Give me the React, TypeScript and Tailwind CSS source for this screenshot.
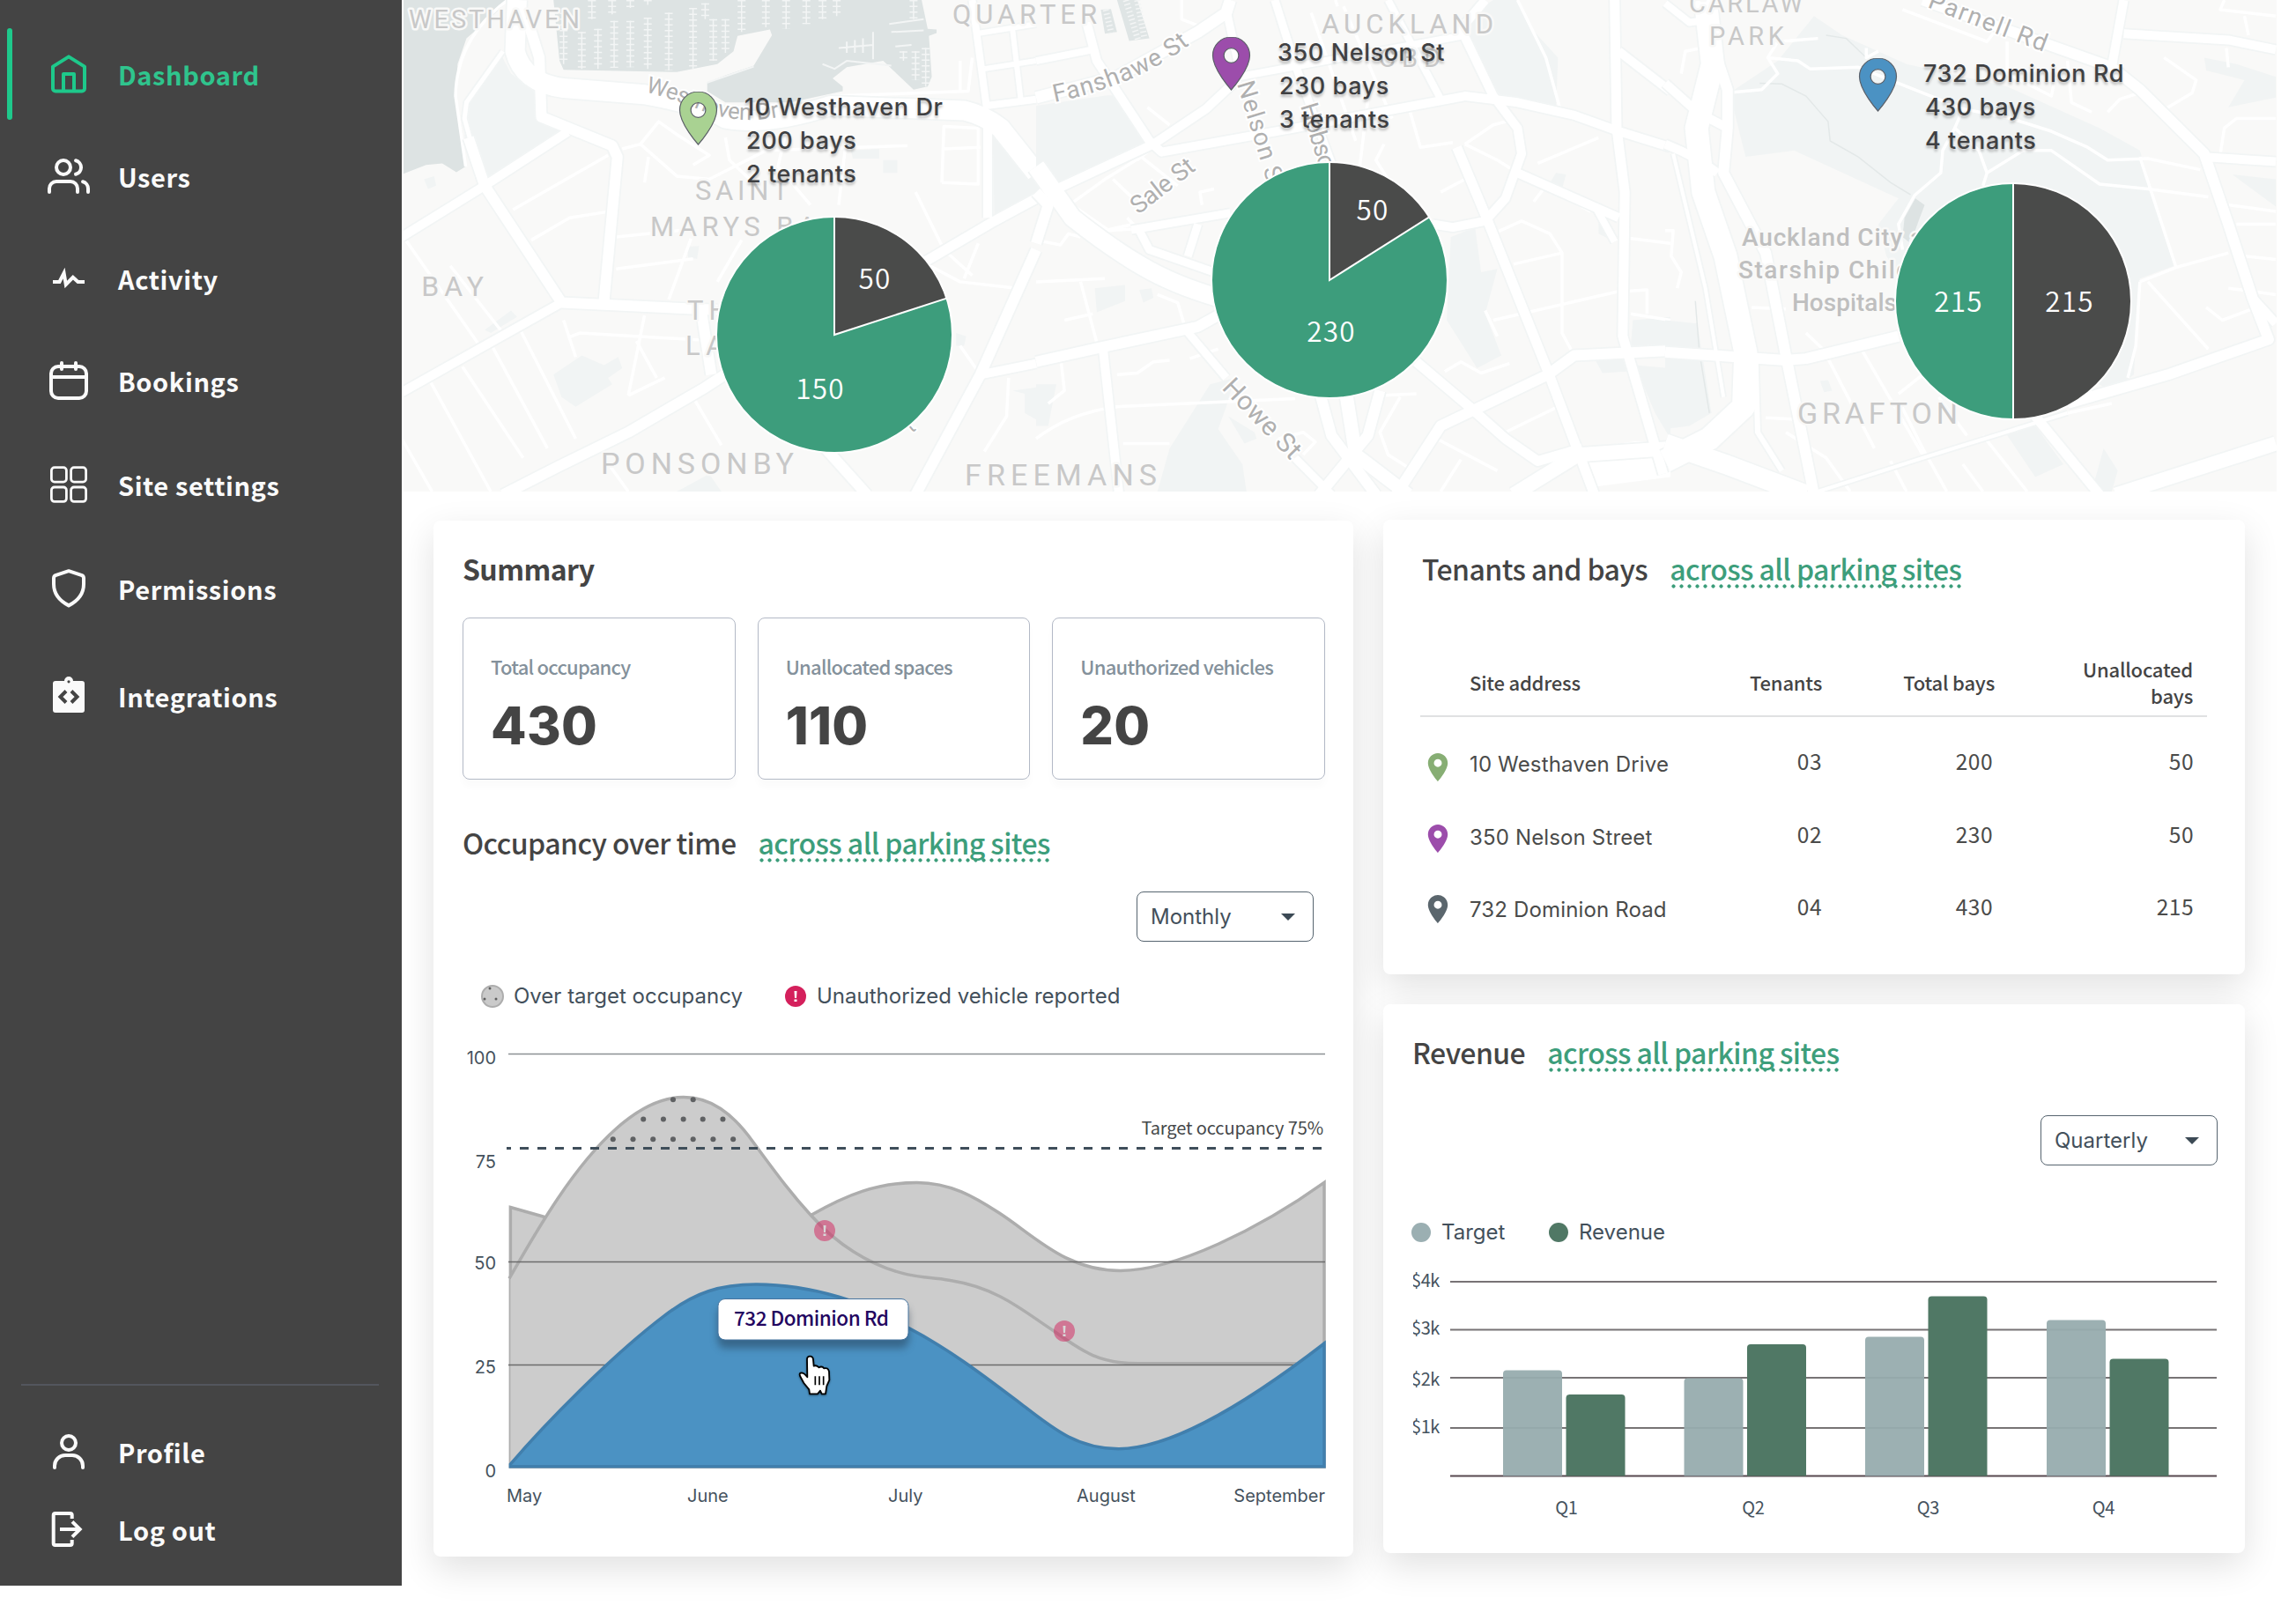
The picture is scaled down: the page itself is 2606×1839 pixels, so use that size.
import type { ReactNode } from "react";

const SOURCE = "font-['Noto_Sans_CJK_SC','Noto_Sans',sans-serif]";
const INTER = "font-['Inter',sans-serif]";

/* ---------------------------------- icons --------------------------------- */

function Icon({ children, w = 4 }: { children: ReactNode; w?: number }) {
  return (
    <svg className="size-12 shrink-0" viewBox="0 0 48 48" fill="none" stroke="currentColor" strokeWidth={w}>
      {children}
    </svg>
  );
}

const HomeIcon = () => (
  <Icon>
    <path d="M24 4.4L6 15.6V40.5a3 3 0 0 0 3 3H39a3 3 0 0 0 3-3V15.6Z" strokeLinejoin="round" />
    <path d="M18 43V24H30V43" strokeLinejoin="round" />
  </Icon>
);
const UsersIcon = () => (
  <Icon>
    <g strokeLinecap="round" strokeLinejoin="round">
      <path d="M34 42v-4a8 8 0 0 0-8-8H10a8 8 0 0 0-8 8v4" />
      <circle cx="18" cy="14" r="8" />
      <path d="M46 42v-4a8 8 0 0 0-6-7.74M32 6.26a8 8 0 0 1 0 15.5" />
    </g>
  </Icon>
);
const ActivityIcon = () => (
  <Icon w={4}>
    <path d="M6 28H13.5L18.6 18L20.8 31L28.800 22.800L34.5 28H42" strokeMiterlimit={10} />
  </Icon>
);
const BookingsIcon = () => (
  <Icon>
    <rect x="4" y="8" width="40" height="36" rx="8" />
    <path d="M4 20H44" />
    <path d="M16 4V11M32 4V11" strokeLinecap="round" />
  </Icon>
);
const GridIcon = () => (
  <Icon w={2.8}>
    <rect x="4.4" y="4.7" width="17" height="16.4" rx="3.4" />
    <rect x="26.6" y="4.7" width="17" height="16.4" rx="3.4" />
    <rect x="4.4" y="27" width="17" height="16.4" rx="3.4" />
    <rect x="26.6" y="27" width="17" height="16.4" rx="3.4" />
  </Icon>
);
const ShieldIcon = () => (
  <Icon>
    <path d="M24 4.2L9 9.2Q7 10 7 12.5V19C7 31 14.5 38.500 24 43.400C33.500 38.500 41 31 41 19V12.500Q41 10 39 9.200Z" strokeLinejoin="round" />
  </Icon>
);
const IntegrationsIcon = () => (
  <Icon>
    <path
      d="M9 7H19A5 5 0 0 1 29 7H39a3 3 0 0 1 3 3V40a3 3 0 0 1-3 3H9a3 3 0 0 1-3-3V10a3 3 0 0 1 3-3Z"
      fill="currentColor"
      stroke="none"
    />
    <circle cx="24" cy="7.800" r="1.600" fill="#444" stroke="none" />
    <path d="M21 18.500L14.500 25L21 31.500M27 18.500L33.500 25L27 31.500" stroke="#444" />
  </Icon>
);
const ProfileIcon = () => (
  <Icon>
    <circle cx="24" cy="14" r="8" />
    <path d="M8 42V40A12 12 0 0 1 20 28H28A12 12 0 0 1 40 40V42" strokeLinecap="round" />
  </Icon>
);
const LogoutIcon = () => (
  <Icon>
    <path d="M27.700 12V8a2 2 0 0 0-2-2H8.700a2 2 0 0 0-2 2V40a2 2 0 0 0 2 2H25.700a2 2 0 0 0 2-2V36" />
    <path d="M14 24H36.500M28 15.300L36.700 24L28 32.700" />
  </Icon>
);

function Pin({ fill, className, outline = false }: { fill: string; className: string; outline?: boolean }) {
  return (
    <svg className={className} viewBox="5 2 14 20" overflow="visible">
      <path
        fillRule="evenodd"
        fill={fill}
        stroke={outline ? "#5c6068" : "none"}
        strokeWidth={outline ? 0.4 : 0}
        d="M12 2C8.130 2 5 5.130 5 9c0 5.250 7 13 7 13s7-7.750 7-13c0-3.870-3.130-7-7-7zm0 4.200a2.800 2.800 0 1 1 0 5.600a2.800 2.800 0 0 1 0-5.600z"
      />
    </svg>
  );
}

/* --------------------------------- sidebar -------------------------------- */

const NAV = [
  { label: "Dashboard", icon: <HomeIcon />, h: "h-[116px]", active: true },
  { label: "Users", icon: <UsersIcon />, h: "h-[116px]" },
  { label: "Activity", icon: <ActivityIcon />, h: "h-[116px]" },
  { label: "Bookings", icon: <BookingsIcon />, h: "h-[116px]" },
  { label: "Site settings", icon: <GridIcon />, h: "h-[120px]" },
  { label: "Permissions", icon: <ShieldIcon />, h: "h-[116px]" },
  { label: "Integrations", icon: <IntegrationsIcon />, h: "h-[128px]" },
];

function NavItem({ label, icon, h, active = false }: { label: string; icon: ReactNode; h: string; active?: boolean }) {
  return (
    <a className={`relative flex items-center pl-[54px] ${h} ${active ? "text-[#1ec98b]" : "text-[#fafafa]"}`}>
      {active && <span className="absolute left-2 top-[5px] h-[104px] w-1.5 rounded-full bg-[#1ec98b]" />}
      <span className="-mt-[2px]">{icon}</span>
      <span className={`${SOURCE} -mt-[3px] ml-8 text-[29px] font-bold leading-10 tracking-[0.600px] ${active ? "text-[#2fc48d]" : "text-[#fafafa]"}`}>
        {label}
      </span>
    </a>
  );
}

function Sidebar() {
  return (
    <aside className="flex h-[1800px] w-[456px] shrink-0 flex-col bg-[#444444] pt-[27px]">
      <nav>
        {NAV.map((n) => (
          <NavItem key={n.label} {...n} />
        ))}
      </nav>
      <div className="mx-6 mt-auto h-0.5 w-[406px] bg-[#53565e]" />
      <div className="mb-[19px] mt-8">
        <NavItem label="Profile" icon={<ProfileIcon />} h="h-[88px]" />
        <NavItem label="Log out" icon={<LogoutIcon />} h="h-[88px]" />
      </div>
    </aside>
  );
}

/* ----------------------------------- map ---------------------------------- */

type Road = [d: string, width: number];

const WEST_ROADS: Road[] = [
  ["M285,0L280,160Q300,260 400,275L600,295Q750,330 800,370Q900,395 1060,330L1390,345Q1440,360 1480,400L1568,540", 22],
  ["M310,60L340,180L345,365L520,455L533,490L500,940", 12],
  ["M165,430L205,580L395,945L780,968", 12],
  ["M0,740L205,580L410,412", 10],
  ["M0,1225L395,945", 10],
  ["M250,1545L390,1455L560,1350L750,1210L860,1120", 12],
  ["M740,968L765,1170", 12],
  ["M1290,820L1465,690L1568,620", 11],
  ["M1448,380L1448,680", 10],
  ["M1568,780L1430,1170L1270,1545", 12],
  ["M1430,1170L1568,1135", 10],
  ["M1040,1390L1150,1545", 12],
  ["M1410,0L1445,330L1568,310", 8],
  ["M1420,105L1568,75M1440,215L1568,190M1510,95L1530,310", 6],
  ["M250,160L160,320L155,370L168,430", 5],
];
const WEST_LANES =
  "M262,0Q135,120 133,300L158,520M275,655L510,485M320,750L415,680L505,662M545,465L590,450L635,380L680,420L760,485L720,515M590,450L680,550L760,560L900,470L1250,455M610,490L600,570M530,740L720,715M530,840L720,808M715,745L660,935M840,750L780,880M600,985L560,1235M410,1055L440,1040L780,1065M580,1065L630,1180M10,750L190,1075M120,830L250,1040M70,1190L220,1535M150,1145L300,1430M225,1085L360,1400M295,1035L430,1370M400,1000L430,1115M0,1370L75,1535M500,1430L560,1535M720,1240L790,1390M560,1235L650,1180M1270,600L1340,780L1410,860M1100,420L1080,640M1335,570L1425,575L1425,400L1340,395L1335,570M1340,465L1430,460M1290,820L1380,880L1520,900M1380,1080L1430,1170M1425,760L1390,870M1500,1180L1495,1300L1440,1410M1380,190L1380,290M1060,300L1400,285L1410,180M800,430L810,500L860,560M950,410L930,520L1010,640";

const MID_ROADS: Road[] = [
  ["M0,520L90,680Q180,770 260,830Q340,890 450,930", 20],
  ["M0,190L140,155", 8],
  ["M125,70L150,190L280,440L310,475L640,400L1060,300L1190,320L1330,360L1440,410L1568,460", 10],
  ["M60,585L290,450L420,340L500,245", 10],
  ["M0,305L200,240L400,100L470,40L480,0", 13],
  ["M470,30L500,200", 9],
  ["M590,0L640,200L730,510", 9],
  ["M500,240L1060,110", 8],
  ["M870,0L1000,310", 8],
  ["M1110,0L1050,90L1130,300L1190,400L1200,480L1160,620L1110,690L1030,710L980,700", 10],
  ["M1040,460L1110,670L1265,1160L1380,1545", 11],
  ["M1430,0L1435,400L1455,600L1450,1050L1550,1480", 11],
  ["M1440,160L1568,285", 10],
  ["M1190,540L1440,680", 10],
  ["M1380,640L1430,755", 8],
  ["M0,1130L160,1085L400,1020L450,985", 12],
  ["M165,1085L205,1545", 10],
  ["M370,1030L470,1180", 9],
  ["M640,1430L730,1545", 9],
  ["M940,1130L1080,1280L1160,1370L1240,1440L1350,1400", 11],
  ["M890,1545L1000,1330L1265,1170L1330,1110L1568,1095", 12],
  ["M700,1220L730,1360L840,1545", 12],
  ["M765,1220L790,1420L920,1545", 15],
  ["M850,1220L820,1360L700,1545", 12],
  ["M235,718L480,665", 9],
  ["M255,720L280,780L440,850", 9],
  ["M400,700L375,800", 9],
  ["M0,600L30,640L0,760", 12],
  ["M1180,1545L1340,1420L1568,1400", 16],
];
const MID_LANES =
  "M60,660L170,560L260,490L350,580M190,560L240,620M100,650L180,720L240,715M170,720L240,700L225,680M250,500L330,420M360,0L360,60L420,90M680,40L790,440M760,20L880,370M820,310L800,520M740,0L745,20M1190,0L1260,180L1295,340M1060,450L1130,390L1190,370M1060,450L1140,500L1190,540M1240,510L1390,430M1230,630L1260,580L1370,660M1130,730L1200,690L1270,730L1300,790L1180,825M1130,1000L1440,910M1110,970L1140,1050M1300,790L1300,1040L1330,1110M1440,740L1568,760M1450,910L1510,905L1510,980M1470,980L1568,1000M0,880L170,870M110,880L150,1070M70,1000L140,980M300,920L350,945L370,1030M0,1370Q80,1290 200,1270L640,1245M200,1170L250,1165L290,1130L330,1125M215,1385L330,1385M60,1110L70,1220L30,1260M380,1120L450,1090M990,1370L1140,1470M1050,1435L1000,1535M1160,1350L1290,1270M1010,1160L1050,1130L1100,1165L1170,1135M850,1235L940,1230M900,1240L850,1350L870,1420L920,1460M600,1370L660,1350L690,1380L660,1420M920,1460L950,1400M0,750L60,765L80,730L110,740M440,590L405,600L410,640M275,335L330,390M860,450L840,500L870,560M1000,600L1060,560M920,330L950,460L1030,445";

const EAST_ROADS: Road[] = [
  ["M100,0L118,200L78,400L95,600L150,800L200,1100L195,1270L110,1370L0,1440", 26],
  ["M0,260L80,350L155,400", 10],
  ["M120,150L155,280L155,400L145,540L250,790L300,1110L370,1545", 12],
  ["M0,450Q80,490 130,540", 10],
  ["M20,480L100,900L145,1240", 4],
  ["M0,1100L300,1125L350,1120L580,1050", 12],
  ["M640,0L1110,210L1180,280L1340,480L1400,700L1460,930L1500,1060L1250,1170L1000,1260", 12],
  ["M1460,930L1518,1010", 10],
  ["M1140,0L1110,210", 10],
  ["M1140,105L1400,125L1518,155", 10],
  ["M1340,490L1518,505", 10],
  ["M920,1300L1080,1545", 11],
  ["M1120,1545L1518,1385", 16],
  ["M0,1385L150,1450L350,1545", 22],
  ["M225,1130L230,1350L290,1470", 6],
  ["M380,1535L640,1430L1000,1290", 4],
  ["M0,10L60,70L120,60", 8],
];
const EAST_LANES =
  "M255,180L330,190L360,215L480,210L640,290L740,340L860,370L960,410L1050,460L1100,500L1200,495L1330,530M740,340L720,400L690,470L685,540L620,610L580,700L590,780M720,400L780,470L800,540L790,580M800,540L890,470L960,470L1080,575L1200,590L1350,615M1180,490L1270,835M1270,835L1400,790M1180,880L1270,835M1180,880L1170,1080L1150,1180M1200,880L1350,1090M1345,960L1385,1000L1470,960M1400,900L1518,920M405,1120L520,1400M490,1095L640,1420M250,1305L330,1310M300,1350L400,1430L460,1535M580,1250L640,1400L700,1535M680,1240L750,1360M560,1440L600,1535M790,1360L900,1535M1000,1290L1110,1260M640,1170L580,1230M590,30L800,130L830,80M850,130L850,230L960,300L970,240M1000,190L1010,320L1060,350M1100,350L1130,310L1180,290M1380,480L1390,400L1420,370L1518,370M1230,350L1310,290L1320,250L1240,180M1395,150L1400,210M1440,50L1450,110M1390,0L1380,30L1518,50M1400,640L1518,660M1420,700L1518,700M1440,800L1518,810M150,290L240,280L280,230L255,180L280,130L380,120M40,230L50,160L90,150M0,720L20,720L15,800L40,850L30,900M215,960L300,965M740,1450L790,1535M350,1040L400,1100M530,160L500,180L500,150";

function Roads({ roads, lanes }: { roads: Road[]; lanes: string }) {
  return (
    <g fill="none" strokeLinejoin="round">
      <path d={lanes} stroke="#ffffff" strokeWidth="3.5" vectorEffect="non-scaling-stroke" />
      {roads.map(([d, w]) => (
        <path key={d} d={d} stroke="#f2f5f5" strokeWidth={w + 3.5} vectorEffect="non-scaling-stroke" />
      ))}
      {roads.map(([d, w]) => (
        <path key={d} d={d} stroke="#ffffff" strokeWidth={w} vectorEffect="non-scaling-stroke" />
      ))}
    </g>
  );
}

const PIERS =
  "M400,40V200M445,100V215M485,90V215M525,65V212M565,65V210M608,55V215M660,40V220M720,25V215M750,10V60M770,60V190M800,60V165M470,0V60M520,0V45M565,0V25M608,0V15M840,0V100M900,0V85M950,0V90M1000,0V75M1040,0V60M1075,0V50M1265,0V60M1295,150V270M1270,160V250M1240,160V190";

function MapLabel({ x, y, w, size, children }: { x: number; y: number; w: number; size: number; children: string }) {
  return (
    <text x={x} y={y} textLength={w} fontSize={size}>
      {children}
    </text>
  );
}

function MapCanvas() {
  return (
    <svg className="block h-full w-full" viewBox="458 0 2126 558" fontFamily="Roboto, sans-serif">
      <rect x="458" width="2126" height="558" fill="#f9f9f8" />
      <g transform="translate(456 0) scale(.4592 .3635)">
        <g fill="#dde3e3">
          <path d="M0,0H265L215,60L160,120L138,200L135,300L150,420L158,520L135,538L100,510L60,515L0,545Z" />
          <path d="M375,0H1285L1300,90L1322,92L1322,103L1303,112L1310,240L1300,270L1265,280L1215,220L1190,190L1100,210L1065,245L1090,270V285L960,320H800L755,285V258L800,235L870,205L915,110L910,92L830,112L820,160L780,200L680,225L400,218L390,190Z" />
        </g>
        <path
          fill="#f1f4f4"
          d="M245,170L165,320L155,430L210,565L415,412L345,375L325,280L270,230ZM375,1170L445,1110L500,1140L535,1115L545,1150L510,1180L520,1200L430,1270L395,1240ZM680,1535L760,1480L790,1535ZM1460,400L1568,540V620L1465,690ZM1110,470L1180,465V495H1115ZM1190,500H1225V540H1190ZM205,1030L270,970L285,990L220,1040ZM55,560L80,550L85,580L65,590ZM1510,1220L1568,1210V1310L1540,1290V1230ZM1370,1040L1395,1050L1390,1080L1370,1080ZM705,770L735,768L730,808L708,805Z"
        />
        <path d={PIERS} fill="none" stroke="#f3f5f5" strokeWidth="1.500" vectorEffect="non-scaling-stroke" />
        <path d={PIERS} fill="none" stroke="#f3f5f5" strokeWidth="9" strokeDasharray="1.500 5" vectorEffect="non-scaling-stroke" />
        <path
          d="M1080,150L1165,140M1100,130V165M1120,125V165M1140,120V165M1165,100V185M1040,200L1070,215L1100,190L1210,205M1205,75L1290,60M1210,100L1290,95M1220,145L1260,140M755,258L870,208"
          fill="none"
          stroke="#f3f5f5"
          strokeWidth="2"
          vectorEffect="non-scaling-stroke"
        />
        <Roads roads={WEST_ROADS} lanes={WEST_LANES} />
      </g>
      <g transform="translate(1176 0) scale(.4592 .3635)">
        <path
          fill="#f1f4f4"
          d="M0,330L175,298H200L280,440L60,575L0,610ZM1080,40L1130,0H1190L1225,90L1290,180L1285,340L1150,305L1070,150ZM1025,740L1085,710L1100,850L1140,840L1110,980L1150,1110L1090,1150L1015,1000ZM1475,1000L1568,990V1090L1470,1080ZM1480,1140L1568,1150V1370L1530,1290ZM385,1290L430,1200L490,1180L470,1270L450,1340L510,1450L520,1535H300L330,1400ZM145,900L220,890V940L150,975ZM0,1200H50L30,1330H0ZM255,905L285,900L290,930L265,945ZM1285,540L1310,545L1300,590L1270,570ZM1390,690L1430,720V755L1390,730ZM475,1300L540,1350L545,1370L515,1385ZM1380,1120H1450L1460,1160L1400,1165Z"
        />
        <path fill="#dfe5e5" d="M160,30L185,28L200,100L170,105ZM200,0H250L280,120L230,128Z" />
        <path d="M172,30L186,105M222,0L252,125M250,0L268,120" fill="none" stroke="#f3f5f5" strokeWidth="7" strokeDasharray="1.500 3" vectorEffect="non-scaling-stroke" />
        <path d="M1350,1400L1480,1378H1568V1490L1380,1520Z" fill="#fff" />
        <Roads roads={MID_ROADS} lanes={MID_LANES} />
      </g>
      <g transform="translate(1890 0) scale(.4566 .3635)">
        <path
          fill="#f1f4f4"
          d="M370,50L440,110L600,200L850,270L1080,400L1180,470L1265,830L1180,870L1165,1170L1110,1220L600,900L550,800L530,700L580,620L320,470L200,490L160,290L280,190ZM0,1000L80,1010L115,1290L60,1330L0,1340ZM1340,180L1420,200L1518,240V305L1400,335L1440,250L1345,220ZM1410,545L1518,560V645ZM845,1350L920,1330L990,1450L920,1490ZM385,1190L405,1187L415,1220L395,1225ZM1090,1400L1125,1470L1110,1535H1060Z"
        />
        <path fill="#dde3e3" d="M622,620L645,640L630,690L610,760L590,740L595,680Z" />
        <path
          d="M235,260L290,262L350,300L405,380L410,440L480,490L560,570L610,608M400,110L450,120L500,180M75,940L85,1100L110,1290"
          fill="none"
          stroke="#e3e8e8"
          strokeWidth="1.500"
          vectorEffect="non-scaling-stroke"
        />
        <Roads roads={EAST_ROADS} lanes={EAST_LANES} />
      </g>

      <g fill="#c8c8c8" stroke="#f9f9f8" strokeWidth="5" paintOrder="stroke" strokeLinejoin="round">
        <MapLabel x={464} y={32} w={194} size={29}>WESTHAVEN</MapLabel>
        <MapLabel x={1081} y={27} w={164} size={31}>QUARTER</MapLabel>
        <MapLabel x={1500} y={38} w={195} size={31}>AUCKLAND</MapLabel>
        <MapLabel x={1565} y={76} w={70} size={29}>CBD</MapLabel>
        <MapLabel x={1917} y={14} w={129} size={29}>CARLAW</MapLabel>
        <MapLabel x={1940} y={50.5} w={85} size={29}>PARK</MapLabel>
        <MapLabel x={789} y={227} w={106} size={31}>SAINT</MapLabel>
        <MapLabel x={738} y={268} w={211} size={31}>MARYS BAY</MapLabel>
        <MapLabel x={440} y={336} w={109} size={32}>E BAY</MapLabel>
        <MapLabel x={780} y={363} w={70} size={31}>THE</MapLabel>
        <MapLabel x={778} y={403} w={120} size={31}>LANES</MapLabel>
        <MapLabel x={682} y={538} w={219} size={34}>PONSONBY</MapLabel>
        <MapLabel x={1095} y={551} w={218} size={34}>FREEMANS</MapLabel>
        <MapLabel x={2040} y={481} w={182} size={34}>GRAFTON</MapLabel>
        <g fontWeight="500" fill="#bfbfbf">
          <MapLabel x={1977} y={279} w={206} size={28}>Auckland City a</MapLabel>
          <MapLabel x={1973} y={316} w={240} size={28}>Starship Children</MapLabel>
          <MapLabel x={2034} y={353} w={119} size={28}>Hospitals</MapLabel>
        </g>
      </g>
      <g fill="#b0b0b0" fontSize="28" stroke="#ffffff" strokeWidth="4" paintOrder="stroke">
        <path id="westhaven-dr" d="M732,104Q775,116 800,127Q840,142 890,132" fill="none" stroke="none" />
        <path id="fanshawe-st" d="M1197,116Q1295,96 1356,46" fill="none" stroke="none" />
        <text fontSize="26" textLength="158">
          <textPath href="#westhaven-dr">Westhaven Dr</textPath>
        </text>
        <text textLength="168">
          <textPath href="#fanshawe-st">Fanshawe St</textPath>
        </text>
        <text transform="translate(1292 244) rotate(-38)" textLength="84">Sale St</text>
        <text transform="translate(1404 95) rotate(73)" textLength="128">Nelson St</text>
        <text transform="translate(1476 120) rotate(73)" textLength="120">Hobson St</text>
        <text transform="translate(1386 441) rotate(46)" fontSize="30" textLength="114">Howe St</text>
        <text transform="translate(2187 8) rotate(21)" textLength="142">Parnell Rd</text>
        <text transform="translate(1035 492) rotate(-40)" fontSize="22">t</text>
      </g>
    </svg>
  );
}

type Slice = { value: number; x: number; y: number };

function Pie({ className, angle, dark, light }: { className: string; angle: number; dark: Slice; light: Slice }) {
  const r = 134;
  const a = (angle * Math.PI) / 180;
  const ex = r * Math.sin(a);
  const ey = -r * Math.cos(a);
  return (
    <svg className={`absolute size-[270px] ${className}`} viewBox="-135 -135 270 270">
      <circle r={r} fill="#3d9d7c" />
      <path d={`M0 0V${-r}A${r} ${r} 0 0 1 ${ex} ${ey}Z`} fill="#4a4b4a" />
      <circle r={r} fill="none" stroke="#fff" strokeWidth="2" />
      <path d={`M0 ${-r}V0L${ex} ${ey}`} fill="none" stroke="#fff" strokeWidth="2" />
      <g className={SOURCE} fill="#fff" fontSize="31.500" fontWeight="350" letterSpacing="1.200" textAnchor="middle">
        <text x={dark.x} y={dark.y}>{dark.value}</text>
        <text x={light.x} y={light.y}>{light.value}</text>
      </g>
    </svg>
  );
}

function SiteLabel({ className, lines }: { className: string; lines: string[] }) {
  return (
    <div className={`absolute whitespace-nowrap ${INTER} text-[27px] font-medium leading-[38px] tracking-[0.600px] text-[#3f4042] [text-shadow:0_3px_3px_rgba(0,0,0,0.25)] ${className}`}>
      <p>{lines[0]}</p>
      <p className="ml-0.5">{lines[1]}</p>
      <p className="ml-0.5">{lines[2]}</p>
    </div>
  );
}

function SiteMap() {
  return (
    <section className="relative z-10 ml-0.5 h-[558px] w-[2126px] overflow-hidden">
      <MapCanvas />
      <Pin fill="#a9d292" outline className="absolute left-[313px] top-[104px] h-[60px] w-[43px]" />
      <SiteLabel className="left-[387px] top-[103px]" lines={["10 Westhaven Dr", "200 bays", "2 tenants"]} />
      <Pie className="left-[354px] top-[245px]" angle={72} dark={{ value: 50, x: 46, y: -52 }} light={{ value: 150, x: -16, y: 73 }} />
      <Pin fill="#9c4dab" outline className="absolute left-[918px] top-[42px] h-[60px] w-[43px]" />
      <SiteLabel className="left-[992px] top-[41px]" lines={["350 Nelson St", "230 bays", "3 tenants"]} />
      <Pie className="left-[916px] top-[183px]" angle={57.7} dark={{ value: 50, x: 49, y: -68 }} light={{ value: 230, x: 2, y: 70 }} />
      <Pin fill="#4b92c3" outline className="absolute left-[1652px] top-[66px] h-[60px] w-[43px]" />
      <SiteLabel className="left-[1725px] top-[65px]" lines={["732 Dominion Rd", "430 bays", "4 tenants"]} />
      <Pie className="left-[1692px] top-[207px]" angle={180} dark={{ value: 215, x: 64, y: 12 }} light={{ value: 215, x: -62, y: 12 }} />
    </section>
  );
}

/* ---------------------------------- cards --------------------------------- */

function Card({ className, children }: { className: string; children: ReactNode }) {
  return (
    <section className={`flex flex-col rounded-lg bg-white shadow-[0_14px_40px_rgba(0,0,0,0.12)] ${className}`}>{children}</section>
  );
}

function Heading({ title }: { title: string }) {
  return (
    <h2 className={`flex gap-[25px] ${SOURCE} text-[32px] font-medium leading-10 tracking-[-0.550px] text-[#444]`}>
      <span>{title}</span>
      <a className="relative text-[#3d9e7b]">
        across all parking sites
        <span className="absolute -bottom-[3px] left-0 h-[5px] w-full bg-[radial-gradient(circle,#3d9e7b_1.800px,transparent_2.400px)] bg-[length:9px_5px]" />
      </a>
    </h2>
  );
}

function Select({ value, className }: { value: string; className: string }) {
  return (
    <button className={`flex h-[57px] w-[201px] items-center justify-between self-end rounded-lg border-[1.500px] border-[#56646f] pl-[15px] pr-5 ${INTER} text-2xl text-[#43505b] ${className}`}>
      {value}
      <svg className="h-2 w-4" viewBox="0 0 16 8">
        <path d="M0 0H16L8 8Z" fill="#3c4a55" />
      </svg>
    </button>
  );
}

function Stat({ label, value }: { label: string; value: number }) {
  return (
    <div className="h-[184px] rounded-lg border border-[#b3b9c6] pl-[31px] pt-[39px] shadow-[0_8px_8px_rgba(0,0,0,0.02)]">
      <p className={`${SOURCE} text-[22px] font-medium leading-[30px] tracking-[-0.750px] text-[#84919b]`}>{label}</p>
      <p className={`${INTER} mt-[23px] text-[59px] font-extrabold leading-[60px] tracking-[0.300px] text-[#444]`}>{value}</p>
    </div>
  );
}

function Alert({ x, y, faded = false }: { x: number; y: number; faded?: boolean }) {
  return (
    <g transform={`translate(${x} ${y})`}>
      <circle r="12" fill="#d4205c" opacity={faded ? 0.5 : 1} />
      <path d="M-1.500 -6H1.500L1 2H-1ZM-1.500 3.500H1.500V6H-1.500Z" fill={faded ? "#d8d8d8" : "#fff"} />
    </g>
  );
}

const OVER_DOTS: [number, number][] = [
  [413, 332], [446, 332],
  [364, 382], [397, 382], [430, 382], [462, 382], [495, 382],
  [314, 433], [347, 433], [380, 433], [413, 433], [446, 433], [479, 433], [512, 433],
];

function OccupancyChart() {
  const area = { strokeWidth: 3.5, vectorEffect: "non-scaling-stroke" as const };
  return (
    <svg className="h-[580px] w-[980px] overflow-visible" viewBox="525 1151 980 580">
      <path d="M577 1196.500H1504" stroke="#8c9094" strokeWidth="1.500" />
      <g transform="translate(479.500 1100) scale(.68878 .44643)">
        <g fill="#cccccc" stroke="#adadad">
          <path {...area} d="M145,606L200,630L420,700L640,626C700,573 750,543 815,543C870,543 910,580 950,620C1010,680 1060,767 1150,767C1240,767 1380,660 1486,543V1266H145Z" />
          <path d="M145,785C190,660 250,500 320,405C360,350 395,326 430,326C475,326 510,365 545,440C590,535 610,575 640,626C680,695 735,755 800,777C830,787 840,783 870,792C950,812 990,870 1040,920C1090,975 1115,1003 1180,1003H1440V1264H145Z" stroke="none" />
          <path {...area} fill="none" d="M143,787C190,660 250,500 320,405C360,350 395,326 430,326C475,326 510,365 545,440C590,535 610,575 640,626C680,695 735,755 800,777C830,787 840,783 870,792C950,812 990,870 1040,920C1090,975 1115,1003 1180,1003H1440" />
        </g>
        {OVER_DOTS.map(([x, y]) => (
          <ellipse key={`${x}-${y}`} cx={x} cy={y} rx="4.400" ry="6.600" fill="#5f6163" />
        ))}
      </g>
      <path d="M577 1432.500H1504M577 1549.500H1504" stroke="#6b6b6b" strokeWidth="1.300" />
      <path
        {...area}
        transform="translate(479.500 1100) scale(.68878 .44643)"
        fill="#4b92c3"
        stroke="#417fad"
        d="M145,1259C200,1160 310,985 400,880C450,822 490,802 550,802C640,802 740,850 800,912C870,968 930,1040 990,1110C1040,1170 1080,1220 1147,1220C1240,1220 1370,1090 1486,952V1265H145Z"
      />
      <path d="M575 1303.500H1504" stroke="#3f4e5a" strokeWidth="3" strokeDasharray="10 10" strokeDashoffset="5" />
      <g className={INTER} fill="#45525d" fontSize="20">
        <g textAnchor="end" letterSpacing="0">
          <text x="563" y="1207.500">100</text>
          <text x="563" y="1325.500">75</text>
          <text x="563" y="1440.500">50</text>
          <text x="563" y="1558.500">25</text>
          <text x="563" y="1676.500">0</text>
        </g>
        <text x="575" y="1704.500">May</text>
        <text x="780" y="1704.500">June</text>
        <text x="1008" y="1704.500">July</text>
        <text x="1222" y="1704.500">August</text>
        <text x="1504" y="1704.500" textAnchor="end">September</text>
      </g>
      <text className={SOURCE} x="1502" y="1287.500" fontSize="20" letterSpacing="-0.100" fill="#45484a" textAnchor="end">
        Target occupancy 75%
      </text>
      <Alert x={936} y={1397} faded />
      <Alert x={1208} y={1511} faded />
      <g className="[filter:drop-shadow(0_9px_4px_rgba(30,50,70,0.45))]">
        <rect x="815" y="1474.500" width="216" height="46.500" rx="8" fill="#fff" stroke="#46749f" strokeWidth="1" />
      </g>
      <text className={SOURCE} x="833" y="1505" fontSize="22.500" letterSpacing="-0.500" fontWeight="500" fill="#230560">
        732 Dominion Rd
      </text>
      <g transform="translate(810 1380) scale(.33333)" className="[filter:drop-shadow(0_3px_3px_rgba(0,0,0,0.400))]">
        <path
          d="M319,550L318,490Q318,479 328,479Q338,479 339,490L341,512Q352,508 358,517Q369,511 376,520Q389,516 393,531L394,560L385,580L381,607H368L363,596L354,607H327L325,592L307,570L294,546Q290,535 300,535Q309,536 319,550Z"
          fill="#fff"
          stroke="#000"
          strokeWidth="5.500"
          strokeLinejoin="round"
        />
        <path d="M346,547V577M360,547V577M374,547V577" stroke="#000" strokeWidth="5" />
      </g>
    </svg>
  );
}

function SummaryCard() {
  return (
    <Card className="ml-9 mt-[33px] h-[1176px] w-[1044px] pl-[33px] pr-8 pt-[34px]">
      <h2 className={`${SOURCE} text-[32px] font-bold leading-10 tracking-[-0.600px] text-[#444]`}>Summary</h2>
      <div className="mt-9 grid grid-cols-3 gap-[25px]">
        <Stat label="Total occupancy" value={430} />
        <Stat label="Unallocated spaces" value={110} />
        <Stat label="Unauthorized vehicles" value={20} />
      </div>
      <div className="mt-[51px]">
        <Heading title="Occupancy over time" />
      </div>
      <Select value="Monthly" className="mr-[13px] mt-9" />
      <div className={`mt-[42px] flex h-10 items-center pl-[21px] ${INTER} text-2xl text-[#43505b]`}>
        <svg className="mr-[11px] size-[26px]" viewBox="-13 -13 26 26">
          <circle r="12" fill="#cacaca" stroke="#adadad" strokeWidth="2" />
          <circle cx="-3" cy="-9" r="1.500" fill="#5f5f5f" />
          <circle cx="-9" cy="3" r="1.500" fill="#5f5f5f" />
          <circle cx="4" cy="3" r="1.500" fill="#5f5f5f" />
        </svg>
        <span className="w-[308px]">Over target occupancy</span>
        <svg className="mr-3 size-6" viewBox="-12 -12 24 24">
          <Alert x={0} y={0} />
        </svg>
        <span>Unauthorized vehicle reported</span>
      </div>
      <OccupancyChart />
    </Card>
  );
}

const SITES = [
  { name: "10 Westhaven Drive", tenants: "03", total: 200, free: 50, pin: "#87ae74", pad: "pt-2.5" },
  { name: "350 Nelson Street", tenants: "02", total: 230, free: 50, pin: "#9c4dab", pad: "pt-1.5" },
  { name: "732 Dominion Road", tenants: "04", total: 430, free: 215, pin: "#5b666d", pad: "pt-0.5" },
];

function TenantsCard() {
  const cols = "grid grid-cols-[56px_260px_140px_196px_225px] items-center";
  return (
    <Card className="h-[516px] w-[978px] pt-[35px]">
      <div className="ml-11">
        <Heading title="Tenants and bays" />
      </div>
      <div className="ml-[42px] mt-[72px] w-[893px]">
        <div className={`${cols} ${SOURCE} h-[77px] border-b-2 border-[#e0e1e2] text-[22px] font-medium leading-[29.500px] tracking-[-0.200px] text-[#444]`}>
          <span />
          <span>Site address</span>
          <span className="text-right">Tenants</span>
          <span className="text-right">Total bays</span>
          <span className="text-right">
            Unallocated
            <br />
            bays
          </span>
        </div>
        <div className="mt-[11px]">
          {SITES.map((s) => (
            <div key={s.name} className={`${cols} ${SOURCE} h-[82.500px] text-[24.500px] leading-8 tracking-[0.500px] text-[#4a4b4a]`}>
              <span className={`pl-2 ${s.pad}`}>
                <Pin fill={s.pin} className="h-8 w-6" />
              </span>
              <span className={`${INTER} pt-1 text-[24px] tracking-[0.150px]`}>{s.name}</span>
              <span className="-mt-1 text-right">{s.tenants}</span>
              <span className="-mt-1 pr-0.5 text-right">{s.total}</span>
              <span className="-mr-px -mt-1 text-right">{s.free}</span>
            </div>
          ))}
        </div>
      </div>
    </Card>
  );
}

const TICKS: [string, number, number][] = [
  ["$4k", 1455, 1460.5],
  ["$3k", 1509.5, 1515],
  ["$2k", 1564, 1572.5],
  ["$1k", 1621, 1626.5],
];
const QUARTERS: { q: string; x: number; label: number; target: number; revenue: number }[] = [
  { q: "Q1", x: 1706, label: 1778, target: 1555.5, revenue: 1583 },
  { q: "Q2", x: 1911.5, label: 1990, target: 1564.5, revenue: 1526 },
  { q: "Q3", x: 2117, label: 2188.5, target: 1517.5, revenue: 1471.5 },
  { q: "Q4", x: 2323, label: 2387.5, target: 1498.5, revenue: 1542.5 },
];

const bar = (x: number, top: number) => `M${x} 1675.500V${top + 4}q0-4 4-4h59q4 0 4 4V1675.500Z`;

function RevenueChart() {
  return (
    <svg className="h-[320px] w-[912px]" viewBox="1604 1418 912 320">
      <g className={SOURCE} fontSize="20" fill="#45525d">
        {TICKS.map(([label, line, base]) => (
          <g key={label}>
            <path d={`M1646 ${line}H2516`} stroke="#777375" strokeWidth="1.800" />
            <text x="1634" y={base} letterSpacing="-0.400" textAnchor="end">{label}</text>
          </g>
        ))}
        <path d="M1646 1675.500H2516" stroke="#57494f" strokeWidth="1.800" />
        {QUARTERS.map((b) => (
          <g key={b.q}>
            <path d={bar(b.x, b.target)} fill="#97acae" fillOpacity="0.950" />
            <path d={bar(b.x + 71.5, b.revenue)} fill="#507865" />
            <text x={b.label} y="1719" letterSpacing="-0.300" textAnchor="middle">{b.q}</text>
          </g>
        ))}
      </g>
    </svg>
  );
}

function RevenueCard() {
  return (
    <Card className="h-[623px] w-[978px] pl-[33px] pr-8 pt-[34px]">
      <Heading title="Revenue" />
      <Select value="Quarterly" className="mt-[52px] -mr-px" />
      <div className={`mt-[56px] flex h-10 items-center ${INTER} text-2xl text-[#43505b]`}>
        <span className="-ml-px mr-3 size-[22px] rounded-full bg-[#9bafb2]" />
        <span className="w-[122px]">Target</span>
        <span className="mr-3 size-[22px] rounded-full bg-[#507865]" />
        <span>Revenue</span>
      </div>
      <div className="-mt-px ml-px">
        <RevenueChart />
      </div>
    </Card>
  );
}

export default function App() {
  return (
    <div className="flex h-[1839px] w-[2606px] overflow-hidden bg-white">
      <Sidebar />
      <main className="flex flex-1 flex-col">
        <SiteMap />
        <div className="flex">
          <SummaryCard />
          <div className="ml-[34px] mt-8 flex flex-col gap-[34px]">
            <TenantsCard />
            <RevenueCard />
          </div>
        </div>
      </main>
    </div>
  );
}
